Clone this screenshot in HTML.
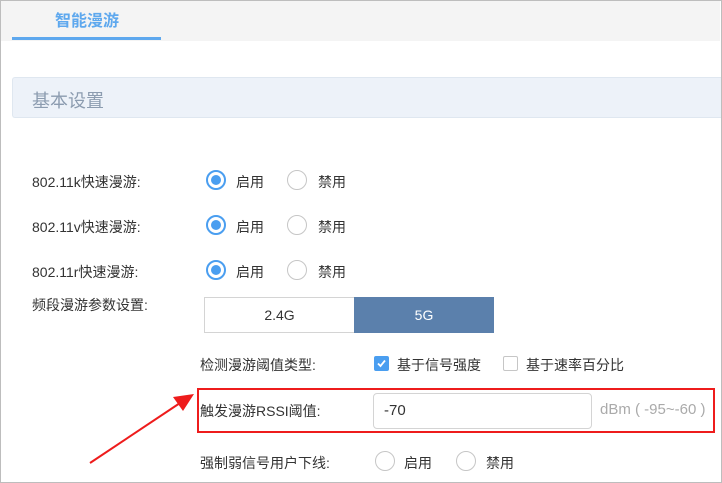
<!DOCTYPE html>
<html><head><meta charset="utf-8"><style>
*{margin:0;padding:0;box-sizing:border-box}
body{width:722px;height:483px;position:relative;overflow:hidden;background:#fff;font-family:"Liberation Sans","Noto Sans CJK SC",sans-serif;font-size:14px;color:#333}
.frame{position:absolute;left:0;top:0;width:722px;height:483px;border:1px solid #bdbdbd}
.a{position:absolute;white-space:nowrap}
.top{position:absolute;left:1px;top:1px;width:719px;height:40px;background:#f4f4f4}
.uline{position:absolute;left:12px;top:37px;width:149px;height:3px;background:#5ea8ee}
.hdr{position:absolute;left:12px;top:77px;width:709px;height:41px;background:#edf2f9;border:1px solid #dfe7f0;border-right:none;border-radius:3px 0 0 3px}
.r{position:absolute;width:20px;height:20px;border-radius:50%;border:1.5px solid #c6c6c6;background:#fff}
.r.on{border:2px solid #4a9ef0}
.r.on::after{content:"";position:absolute;left:3px;top:3px;width:10px;height:10px;border-radius:50%;background:#4a9ef0}
.cb{position:absolute;width:15px;height:15px;border:1px solid #c6c6c6;border-radius:2px;background:#fff}
</style></head><body>
<div class="top"></div>
<div class="uline"></div>
<div class="a" style="left:55px;top:7px;font-size:16px;font-weight:bold;color:#5ea8ee">智能漫游</div>
<div class="hdr"></div>
<div class="a" style="left:32px;top:87px;font-size:18px;color:#8c9cb0">基本设置</div>

<div class="a" style="left:32px;top:172px">802.11k快速漫游:</div>
<div class="r on" style="left:206px;top:170px"></div><div class="a" style="left:236px;top:172px">启用</div>
<div class="r" style="left:287px;top:170px"></div><div class="a" style="left:318px;top:172px">禁用</div>

<div class="a" style="left:32px;top:217px">802.11v快速漫游:</div>
<div class="r on" style="left:206px;top:215px"></div><div class="a" style="left:236px;top:217px">启用</div>
<div class="r" style="left:287px;top:215px"></div><div class="a" style="left:318px;top:217px">禁用</div>

<div class="a" style="left:32px;top:262px">802.11r快速漫游:</div>
<div class="r on" style="left:206px;top:260px"></div><div class="a" style="left:236px;top:262px">启用</div>
<div class="r" style="left:287px;top:260px"></div><div class="a" style="left:318px;top:262px">禁用</div>

<div class="a" style="left:32px;top:295px">频段漫游参数设置:</div>
<div class="a" style="left:204px;top:297px;width:151px;height:36px;border:1px solid #d4d4d4;text-align:center;line-height:34px;color:#333">2.4G</div>
<div class="a" style="left:354px;top:297px;width:140px;height:36px;background:#5b80ac;text-align:center;line-height:36px;color:#fff">5G</div>

<div class="a" style="left:200px;top:355px">检测漫游阈值类型:</div>
<div class="cb" style="left:374px;top:356px;background:#4a9ef0;border-color:#4a9ef0"><svg width="13" height="13" viewBox="0 0 13 13" style="position:absolute;left:0;top:0"><path d="M3 6.5 L5.5 9 L10 3.5" stroke="#fff" stroke-width="1.8" fill="none"/></svg></div>
<div class="a" style="left:397px;top:355px">基于信号强度</div>
<div class="cb" style="left:503px;top:356px"></div>
<div class="a" style="left:526px;top:355px">基于速率百分比</div>

<div class="a" style="left:197px;top:388px;width:518px;height:45px;border:2px solid #ee1c1c"></div>
<div class="a" style="left:200px;top:401px">触发漫游RSSI阈值:</div>
<div class="a" style="left:373px;top:393px;width:219px;height:36px;border:1px solid #d4d4d4;border-radius:4px;padding-left:10px;line-height:34px;font-size:15px">-70</div>
<div class="a" style="left:600px;top:401px;color:#aaa;font-size:15px">dBm ( -95~-60 )</div>

<div class="a" style="left:200px;top:453px">强制弱信号用户下线:</div>
<div class="r" style="left:375px;top:451px"></div><div class="a" style="left:404px;top:453px">启用</div>
<div class="r" style="left:456px;top:451px"></div><div class="a" style="left:486px;top:453px">禁用</div>

<svg width="722" height="483" style="position:absolute;left:0;top:0">
<line x1="90" y1="463" x2="180" y2="403" stroke="#ee1c1c" stroke-width="2"/>
<polygon points="194,394 173,397 183,411" fill="#ee1c1c"/>
</svg>
<div class="frame"></div>
</body></html>
